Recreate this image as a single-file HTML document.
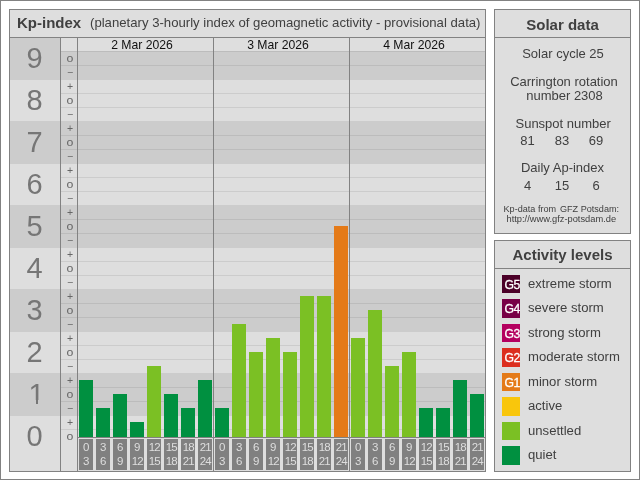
<!DOCTYPE html>
<html><head><meta charset="utf-8"><title>Kp-index</title>
<style>
html,body{margin:0;padding:0;}
body{width:640px;height:480px;position:relative;background:#fff;overflow:hidden;font-family:"Liberation Sans",Arial,sans-serif;color:#404040;}
div{position:absolute;box-sizing:border-box;}
.frame{left:0;top:0;width:640px;height:480px;border:1px solid #828282;}
.panel{background:#dedede;border:1px solid #828282;}
.hl{background:#828282;height:1px;}
.vl{background:#828282;width:1px;}
.band{background:#ccc;}
.gl{height:1px;background:rgba(0,0,0,0.08);}
.big{left:10px;width:50px;height:42px;line-height:42px;text-align:center;font-size:29px;color:#767676;}
.sg{left:61px;width:18px;height:14px;line-height:14px;text-align:center;font-size:10.5px;color:#666;}
.sg.o{font-size:11px;transform:scaleX(1.12);}
.date{top:38px;height:14px;line-height:14px;width:128px;text-align:center;font-size:12.2px;color:#111;}
.tb{top:439px;width:14px;height:31px;background:#808080;color:#dedede;font-size:11.5px;text-align:center;line-height:14px;padding-top:1px;letter-spacing:-0.5px;white-space:nowrap;}
.dd{letter-spacing:-1px;margin-left:0.5px;}
.bar{width:14px;}
.c{text-align:center;white-space:nowrap;}
.sq{left:502px;width:18px;height:18px;color:#fff;font-size:12.2px;line-height:20px;text-align:left;padding-left:2.6px;overflow:hidden;letter-spacing:-0.5px;-webkit-text-stroke:0.3px #fff;font-weight:normal;}
.lt{left:528px;font-size:13.12px;line-height:18px;height:18px;white-space:nowrap;color:#404040;}
</style></head><body>
<div id="w" style="left:0;top:0;width:640px;height:480px;background:#fff;will-change:transform;">
<div class="frame"></div>
<div class="panel" style="left:9px;top:9px;width:477px;height:463px;"></div>

<div class="band" style="left:10px;top:38px;width:50px;height:42px;"></div>
<div class="band" style="left:61px;top:52px;width:424px;height:27px;"></div>
<div class="band" style="left:10px;top:121px;width:50px;height:43px;"></div>
<div class="band" style="left:61px;top:122px;width:424px;height:41px;"></div>
<div class="band" style="left:10px;top:205px;width:50px;height:43px;"></div>
<div class="band" style="left:61px;top:206px;width:424px;height:41px;"></div>
<div class="band" style="left:10px;top:289px;width:50px;height:43px;"></div>
<div class="band" style="left:61px;top:290px;width:424px;height:41px;"></div>
<div class="band" style="left:10px;top:373px;width:50px;height:43px;"></div>
<div class="band" style="left:61px;top:374px;width:424px;height:41px;"></div>
<div class="gl" style="left:61px;top:51px;width:424px;"></div>
<div class="gl" style="left:61px;top:51px;width:424px;"></div>
<div class="gl" style="left:61px;top:65px;width:424px;"></div>
<div class="gl" style="left:61px;top:79px;width:424px;"></div>
<div class="gl" style="left:61px;top:93px;width:424px;"></div>
<div class="gl" style="left:61px;top:107px;width:424px;"></div>
<div class="gl" style="left:61px;top:121px;width:424px;"></div>
<div class="gl" style="left:61px;top:135px;width:424px;"></div>
<div class="gl" style="left:61px;top:149px;width:424px;"></div>
<div class="gl" style="left:61px;top:163px;width:424px;"></div>
<div class="gl" style="left:61px;top:177px;width:424px;"></div>
<div class="gl" style="left:61px;top:191px;width:424px;"></div>
<div class="gl" style="left:61px;top:205px;width:424px;"></div>
<div class="gl" style="left:61px;top:219px;width:424px;"></div>
<div class="gl" style="left:61px;top:233px;width:424px;"></div>
<div class="gl" style="left:61px;top:247px;width:424px;"></div>
<div class="gl" style="left:61px;top:261px;width:424px;"></div>
<div class="gl" style="left:61px;top:275px;width:424px;"></div>
<div class="gl" style="left:61px;top:289px;width:424px;"></div>
<div class="gl" style="left:61px;top:303px;width:424px;"></div>
<div class="gl" style="left:61px;top:317px;width:424px;"></div>
<div class="gl" style="left:61px;top:331px;width:424px;"></div>
<div class="gl" style="left:61px;top:345px;width:424px;"></div>
<div class="gl" style="left:61px;top:359px;width:424px;"></div>
<div class="gl" style="left:61px;top:373px;width:424px;"></div>
<div class="gl" style="left:61px;top:387px;width:424px;"></div>
<div class="gl" style="left:61px;top:401px;width:424px;"></div>
<div class="gl" style="left:61px;top:415px;width:424px;"></div>
<div class="gl" style="left:61px;top:429px;width:424px;"></div>
<div class="hl" style="left:10px;top:37px;width:475px;"></div>
<div class="vl" style="left:60px;top:38px;height:433px;"></div>
<div class="vl" style="left:77px;top:38px;height:433px;"></div>
<div class="vl" style="left:213px;top:38px;height:433px;"></div>
<div class="vl" style="left:349px;top:38px;height:433px;"></div>
<div style="left:17px;top:9px;height:27px;line-height:27px;font-size:15px;font-weight:bold;color:#404040;white-space:nowrap;">Kp-index</div>
<div style="left:90px;top:9px;height:27px;line-height:27px;font-size:13.17px;color:#404040;white-space:nowrap;">(planetary 3-hourly index of geomagnetic activity - provisional data)</div>
<div class="big" style="top:414.5px;left:9.5px;">0</div>
<div class="big" style="top:372.5px;left:11.5px;">1</div>
<div style="left:28px;top:400px;width:7.75px;height:5px;background:#ccc;"></div>
<div style="left:38.4px;top:400px;width:7px;height:5px;background:#ccc;"></div>
<div class="big" style="top:330.5px;left:9.5px;">2</div>
<div class="big" style="top:288.5px;left:9.5px;">3</div>
<div class="big" style="top:246.5px;left:9.5px;">4</div>
<div class="big" style="top:204.5px;left:9.5px;">5</div>
<div class="big" style="top:162.5px;left:9.5px;">6</div>
<div class="big" style="top:120.5px;left:9.5px;">7</div>
<div class="big" style="top:78.5px;left:9.5px;">8</div>
<div class="big" style="top:36.5px;left:9.5px;">9</div>
<div class="sg o" style="top:51px;">o</div>
<div class="sg" style="top:65px;">−</div>
<div class="sg" style="top:79px;">+</div>
<div class="sg o" style="top:93px;">o</div>
<div class="sg" style="top:107px;">−</div>
<div class="sg" style="top:121px;">+</div>
<div class="sg o" style="top:135px;">o</div>
<div class="sg" style="top:149px;">−</div>
<div class="sg" style="top:163px;">+</div>
<div class="sg o" style="top:177px;">o</div>
<div class="sg" style="top:191px;">−</div>
<div class="sg" style="top:205px;">+</div>
<div class="sg o" style="top:219px;">o</div>
<div class="sg" style="top:233px;">−</div>
<div class="sg" style="top:247px;">+</div>
<div class="sg o" style="top:261px;">o</div>
<div class="sg" style="top:275px;">−</div>
<div class="sg" style="top:289px;">+</div>
<div class="sg o" style="top:303px;">o</div>
<div class="sg" style="top:317px;">−</div>
<div class="sg" style="top:331px;">+</div>
<div class="sg o" style="top:345px;">o</div>
<div class="sg" style="top:359px;">−</div>
<div class="sg" style="top:373px;">+</div>
<div class="sg o" style="top:387px;">o</div>
<div class="sg" style="top:401px;">−</div>
<div class="sg" style="top:415px;">+</div>
<div class="sg o" style="top:429px;">o</div>
<div class="date" style="left:78px;">2 Mar 2026</div>
<div class="date" style="left:214px;">3 Mar 2026</div>
<div class="date" style="left:350px;">4 Mar 2026</div>
<div class="bar" style="left:79px;top:380px;height:57px;background:#009040;"></div>
<div class="bar" style="left:96px;top:408px;height:29px;background:#009040;"></div>
<div class="bar" style="left:113px;top:394px;height:43px;background:#009040;"></div>
<div class="bar" style="left:130px;top:422px;height:15px;background:#009040;"></div>
<div class="bar" style="left:147px;top:366px;height:71px;background:#7bc024;"></div>
<div class="bar" style="left:164px;top:394px;height:43px;background:#009040;"></div>
<div class="bar" style="left:181px;top:408px;height:29px;background:#009040;"></div>
<div class="bar" style="left:198px;top:380px;height:57px;background:#009040;"></div>
<div class="bar" style="left:215px;top:408px;height:29px;background:#009040;"></div>
<div class="bar" style="left:232px;top:324px;height:113px;background:#7bc024;"></div>
<div class="bar" style="left:249px;top:352px;height:85px;background:#7bc024;"></div>
<div class="bar" style="left:266px;top:338px;height:99px;background:#7bc024;"></div>
<div class="bar" style="left:283px;top:352px;height:85px;background:#7bc024;"></div>
<div class="bar" style="left:300px;top:296px;height:141px;background:#7bc024;"></div>
<div class="bar" style="left:317px;top:296px;height:141px;background:#7bc024;"></div>
<div class="bar" style="left:334px;top:226px;height:211px;background:#e47a18;"></div>
<div class="bar" style="left:351px;top:338px;height:99px;background:#7bc024;"></div>
<div class="bar" style="left:368px;top:310px;height:127px;background:#7bc024;"></div>
<div class="bar" style="left:385px;top:366px;height:71px;background:#7bc024;"></div>
<div class="bar" style="left:402px;top:352px;height:85px;background:#7bc024;"></div>
<div class="bar" style="left:419px;top:408px;height:29px;background:#009040;"></div>
<div class="bar" style="left:436px;top:408px;height:29px;background:#009040;"></div>
<div class="bar" style="left:453px;top:380px;height:57px;background:#009040;"></div>
<div class="bar" style="left:470px;top:394px;height:43px;background:#009040;"></div>
<div class="hl" style="left:77px;top:437px;width:408px;"></div>
<div class="tb" style="left:79px;">0<br>3</div>
<div class="tb" style="left:96px;">3<br>6</div>
<div class="tb" style="left:113px;">6<br>9</div>
<div class="tb" style="left:130px;">9<br><span class="dd">12</span></div>
<div class="tb" style="left:147px;"><span class="dd">12</span><br><span class="dd">15</span></div>
<div class="tb" style="left:164px;"><span class="dd">15</span><br><span class="dd">18</span></div>
<div class="tb" style="left:181px;"><span class="dd">18</span><br><span class="dd">21</span></div>
<div class="tb" style="left:198px;"><span class="dd">21</span><br><span class="dd">24</span></div>
<div class="tb" style="left:215px;">0<br>3</div>
<div class="tb" style="left:232px;">3<br>6</div>
<div class="tb" style="left:249px;">6<br>9</div>
<div class="tb" style="left:266px;">9<br><span class="dd">12</span></div>
<div class="tb" style="left:283px;"><span class="dd">12</span><br><span class="dd">15</span></div>
<div class="tb" style="left:300px;"><span class="dd">15</span><br><span class="dd">18</span></div>
<div class="tb" style="left:317px;"><span class="dd">18</span><br><span class="dd">21</span></div>
<div class="tb" style="left:334px;"><span class="dd">21</span><br><span class="dd">24</span></div>
<div class="tb" style="left:351px;">0<br>3</div>
<div class="tb" style="left:368px;">3<br>6</div>
<div class="tb" style="left:385px;">6<br>9</div>
<div class="tb" style="left:402px;">9<br><span class="dd">12</span></div>
<div class="tb" style="left:419px;"><span class="dd">12</span><br><span class="dd">15</span></div>
<div class="tb" style="left:436px;"><span class="dd">15</span><br><span class="dd">18</span></div>
<div class="tb" style="left:453px;"><span class="dd">18</span><br><span class="dd">21</span></div>
<div class="tb" style="left:470px;"><span class="dd">21</span><br><span class="dd">24</span></div>
<div class="panel" style="left:494px;top:9px;width:137px;height:225px;"></div>
<div class="hl" style="left:495px;top:37px;width:135px;"></div>
<div class="c" style="left:495px;width:135px;top:10px;height:27px;line-height:29px;font-size:15px;font-weight:bold;">Solar data</div>
<div class="c" style="left:495.5px;width:135px;top:45.5px;height:16px;line-height:16px;font-size:13px;">Solar cycle 25</div>
<div class="c" style="left:496.5px;width:135px;top:73.5px;height:16px;line-height:16px;font-size:13px;">Carrington rotation</div>
<div class="c" style="left:497px;width:135px;top:87.5px;height:16px;line-height:16px;font-size:13px;">number 2308</div>
<div class="c" style="left:495.7px;width:135px;top:115.5px;height:16px;line-height:16px;font-size:13px;">Sunspot number</div>
<div class="c" style="left:507.5px;width:40px;top:132.5px;height:16px;line-height:16px;font-size:13px;">81</div>
<div class="c" style="left:542px;width:40px;top:132.5px;height:16px;line-height:16px;font-size:13px;">83</div>
<div class="c" style="left:576px;width:40px;top:132.5px;height:16px;line-height:16px;font-size:13px;">69</div>
<div class="c" style="left:495px;width:135px;top:160px;height:16px;line-height:16px;font-size:13px;">Daily Ap-index</div>
<div class="c" style="left:507.5px;width:40px;top:178px;height:16px;line-height:16px;font-size:13px;">4</div>
<div class="c" style="left:542px;width:40px;top:178px;height:16px;line-height:16px;font-size:13px;">15</div>
<div class="c" style="left:576px;width:40px;top:178px;height:16px;line-height:16px;font-size:13px;">6</div>
<div class="c" style="left:493.8px;width:135px;top:203.5px;height:10px;line-height:10px;font-size:9.1px;">Kp-data from<span style="display:inline-block;width:1.3px"></span> GFZ Potsdam:</div>
<div class="c" style="left:493.8px;width:135px;top:213.5px;height:10px;line-height:10px;font-size:9.3px;">http://www.gfz-potsdam.de</div>
<div class="panel" style="left:494px;top:240px;width:137px;height:232px;"></div>
<div class="hl" style="left:495px;top:268px;width:135px;"></div>
<div class="c" style="left:495px;width:135px;top:241px;height:27px;line-height:28px;font-size:15px;font-weight:bold;">Activity levels</div>
<div class="sq" style="top:275px;height:18px;background:#4b0028;">G5</div>
<div class="lt" style="top:274.7px;">extreme storm</div>
<div class="sq" style="top:299px;height:19px;background:#780046;">G4</div>
<div class="lt" style="top:298.7px;">severe storm</div>
<div class="sq" style="top:324px;height:18px;background:#b4005f;">G3</div>
<div class="lt" style="top:323.7px;">strong storm</div>
<div class="sq" style="top:348px;height:19px;background:#dc2e1e;">G2</div>
<div class="lt" style="top:347.7px;">moderate storm</div>
<div class="sq" style="top:373px;height:18px;background:#e47a18;">G1</div>
<div class="lt" style="top:372.7px;">minor storm</div>
<div class="sq" style="top:397px;height:19px;background:#f9c60c;"></div>
<div class="lt" style="top:396.7px;">active</div>
<div class="sq" style="top:422px;height:18px;background:#7bc024;"></div>
<div class="lt" style="top:421.7px;">unsettled</div>
<div class="sq" style="top:446px;height:19px;background:#009040;"></div>
<div class="lt" style="top:445.7px;">quiet</div>
</div>
</body></html>
